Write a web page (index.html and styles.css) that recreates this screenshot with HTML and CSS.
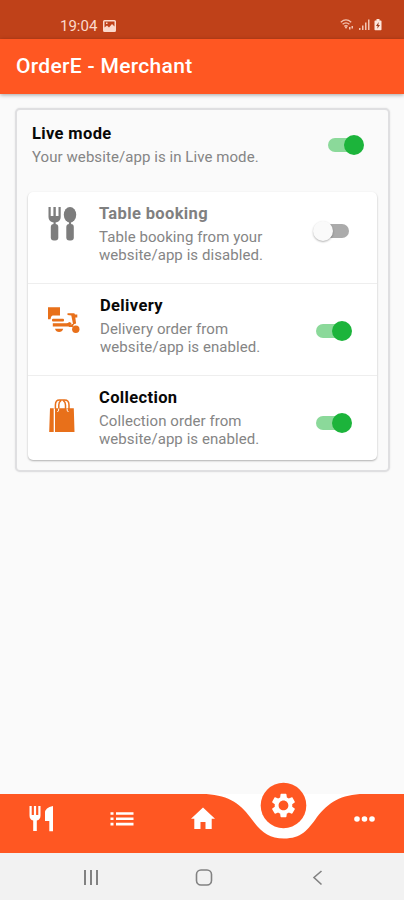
FILE: index.html
```html
<!DOCTYPE html>
<html lang="en">
<head>
<meta charset="utf-8">
<title>OrderE - Merchant</title>
<link rel="stylesheet" href="styles.css">
</head>
<body>
<div class="screen">
  <header class="statusbar">
    <span class="time">19:04</span>
    <svg class="picture" width="13" height="12" viewBox="0 0 13 12"><path fill="#fbd9cc" fill-rule="evenodd" d="M1.500 0h10A1.500 1.500 0 0 1 13 1.500v9a1.500 1.500 0 0 1-1.500 1.500h-10A1.500 1.500 0 0 1 0 10.500v-9A1.500 1.500 0 0 1 1.500 0zM1.500 1.500v6L4 5.500l2 2L9 4l2.500 2.500v-5zM3 2.500h1.500v1.500H3z"/></svg>
    <svg class="signals" width="44" height="14" viewBox="0 0 44 14">
      <g fill="none" stroke="#f3c4b2" stroke-width="1.300"><path d="M.8 4.200Q6 -.4 11.200 4.200M2.600 6.200Q6 3.400 9.400 6.200M4.300 8.200Q6 7 7.700 8.200"/></g>
      <path fill="#f3c4b2" d="M4.500 8.500h3L6 11zM9 9h1.500v2.500H9zM11.500 8H13v2.500h-1.500zM19 10h1.500v2H19zM22 7.500h1.500V12H22zM25 4.500h1.500V12H25zM28 1.500h1.500V12H28z"/>
      <path fill="#fde6dc" d="M36.500 1h3v1.500h1.300q.7 0 .7.700v8.300q0 .8-.8.800h-5.400q-.8 0-.8-.8V3.200q0-.7.700-.7h1.300z"/>
      <path fill="#993817" d="M38.700 4L36 8h1.700l-.5 2.800L40 7h-1.700z"/>
    </svg>
  </header>
  <div class="appbar"><h1>OrderE - Merchant</h1></div>
  <main>
    <section class="panel">
      <div class="live">
        <div class="copy"><h2>Live mode</h2><p>Your website/app is in Live mode.</p></div>
        <span class="switch on"><i></i></span>
      </div>
      <div class="services">
        <div class="row disabled">
          <svg class="icon" width="34" height="36" viewBox="0 0 34 36" fill="#7d7d7d"><path d="M2.500 1h2.200v9h2.700V1h2.400v9h2.700V1h2.200v10q0 4-4 5.300H6.500Q2.500 15 2.500 11z"/><ellipse cx="24" cy="8.800" rx="6.200" ry="7.800"/><path d="M7.500 15h2.200v4H7.500zM22.900 15h2.200v4h-2.200z"/><rect x="4.800" y="18" width="7.500" height="16.500" rx="3"/><rect x="20.300" y="18" width="7.500" height="16.500" rx="3"/></svg>
          <div class="copy"><h2>Table booking</h2><p>Table booking from your<br>website/app is disabled.</p></div>
          <span class="switch"><i></i></span>
        </div>
        <div class="row delivery">
          <svg class="icon" width="34" height="36" viewBox="0 0 34 36" fill="#e8701a"><path d="M2 9.300h12v8.200H6.500q-1.800.5-2 3.700H2z"/><rect x="6" y="20.800" width="12" height="2.600" rx="1"/><path d="M6.800 25.200h13.500q2 0 2.800-1.300l2.500 1-1.800 3.500h-17zM9 30.800h8.200q-1 3.200-4.100 3.200T9 30.800zM21.500 15.200h6.800l.7 1.400h2.300v3h-2l.8 6-3 .9-1.800-8.900-3.800-.7z"/><circle cx="29.800" cy="31.200" r="3.700"/><path d="M22.500 29q1.500-3 5.500-3.300l-1.200 3.300z"/></svg>
          <div class="copy"><h2>Delivery</h2><p>Delivery order from<br>website/app is enabled.</p></div>
          <span class="switch on"><i></i></span>
        </div>
        <div class="row collection">
          <svg class="icon" width="34" height="36" viewBox="0 0 34 36" fill="#e8701a"><path d="M4 10.200h3.700V34H3.200zM9 10.200h18.800L28.500 34H9z"/><g fill="none" stroke="#e8701a" stroke-width="1.500"><path d="M9.400 11V7q0-5 4-5h5.200q4.400 0 4.400 5v4M12.800 11V7q0-3 2.200-4.300M19.500 11V7q0-3-2.200-4.300"/></g><path fill="none" stroke="#fff" d="M12.800 10.500q0 3-1.500 3.500M21 10.500q0 3 1.500 3.500"/></svg>
          <div class="copy"><h2>Collection</h2><p>Collection order from<br>website/app is enabled.</p></div>
          <span class="switch on"><i></i></span>
        </div>
      </div>
    </section>
  </main>
  <nav class="tabs">
    <svg width="404" height="75" viewBox="0 0 404 75">
      <path fill="#fff" d="M202 16h163v50H202z"/>
      <path fill="#ff5722" d="M0 16H202C226 16 240 25 250 39C261 54 268 60.500 284 60.500C301 60.500 308 52 317 39C328 25 341 16 364 16H404V75H0z"/>
      <circle cx="283.500" cy="27.500" r="22.800" fill="#ff5722"/>
      <g fill="#fff">
        <path d="M29.500 28h2.200v9h2.200v-9h2.200v9h2.200v-9h2.200v9.500q0 4.200-3.700 5V53h-3.600V42.500q-3.700-.8-3.700-5zM53 28v25.300h-3.700V43H45v-8q0-5.500 8-7z"/>
        <path d="M110.500 34.200h3v2.600h-3zm5.500 0h17.500v2.600H116zm-5.500 5.300h3v2.600h-3zm5.500 0h17.500v2.600H116zm-5.500 5.300h3v2.600h-3zm5.500 0h17.500v2.600H116z"/>
        <path d="M203 29.500L191 40.800h3.300V51h6.200v-7h5v7h6.200V40.800h3.300z"/>
        <circle cx="357" cy="41" r="2.800"/><circle cx="364.500" cy="41" r="2.800"/><circle cx="372" cy="41" r="2.800"/>
      </g>
      <path fill="#fff" transform="translate(268.850 12.850) scale(1.220)" d="M19.140 12.940c.04-.3.060-.61.060-.94 0-.32-.02-.64-.07-.94l2.030-1.580c.18-.14.230-.41.120-.61l-1.920-3.320c-.12-.22-.37-.29-.59-.22l-2.390.96c-.5-.38-1.030-.7-1.620-.94l-.36-2.540c-.04-.24-.24-.41-.48-.41h-3.840c-.24 0-.43.170-.47.410l-.36 2.540c-.59.240-1.130.57-1.620.94l-2.390-.96c-.22-.08-.47 0-.59.220L2.740 8.870c-.12.210-.08.470.12.610l2.030 1.580c-.05.300-.09.630-.09.940s.02.640.07.940l-2.030 1.580c-.18.140-.23.410-.12.610l1.920 3.320c.12.220.37.290.59.220l2.390-.96c.5.380 1.030.7 1.620.94l.36 2.540c.05.240.24.410.48.410h3.840c.24 0 .44-.17.470-.41l.36-2.540c.59-.24 1.130-.56 1.620-.94l2.390.96c.22.080.47 0 .59-.22l1.920-3.320c.12-.22.070-.47-.12-.61l-2.010-1.580zM12 16c-2.200 0-4-1.800-4-4s1.800-4 4-4 4 1.800 4 4-1.800 4-4 4z"/>
    </svg>
  </nav>
  <div class="sysnav">
    <svg width="404" height="47" viewBox="0 0 404 47" fill="none" stroke="#828282" stroke-width="1.600"><path stroke-width="2" d="M85 17v15M91 17v15M97 17v15"/><rect x="196.500" y="17" width="15" height="15" rx="4.500"/><path d="M321.500 18L314 24.500l7.500 7"/></svg>
  </div>
</div>
</body>
</html>
```
FILE: styles.css
```css
* { box-sizing: border-box; }
body { margin: 0; font-family: Roboto, "Liberation Sans", sans-serif; background: #fafafa; }
h1, h2, p { margin: 0; }
svg { display: block; flex: none; }
.screen { width: 404px; height: 900px; display: flex; flex-direction: column; overflow: hidden; background: #fafafa; }
.statusbar { height: 39px; flex: none; background: #bf4119; display: flex; align-items: flex-start; padding: 17px 20px 0 60px; }
.time { font-size: 15px; line-height: 18px; color: #fbd9cc; width: 43px; }
.picture { margin-top: 3px; }
.signals { margin: 1px 0 0 auto; }
.appbar { height: 55px; flex: none; background: #ff5722; color: #fff; padding: 14px 16px; box-shadow: 0 1px 4px rgba(0,0,0,.35); }
h1 { font-size: 21px; line-height: 26px; font-weight: 500; letter-spacing: .32px; white-space: nowrap; }
main { flex: 1; padding: 14px 14px 0 15px; }
.panel { height: 364px; border: 2px solid #dfdfe1; border-radius: 5px; padding: 0 11px; background: #fafafa; box-shadow: 0 0 2px rgba(0,0,0,.1); }
.live { height: 82px; padding: 13px 0 0 4px; display: flex; }
.copy { flex: 1; white-space: nowrap; }
h2 { font-size: 16.500px; line-height: 22px; font-weight: 700; letter-spacing: .36px; color: #080808; }
p { font-size: 15px; line-height: 18px; letter-spacing: .07px; color: #858585; }
.live p { margin-top: 3px; }
.services { height: 268px; background: #fff; border-radius: 5px; box-shadow: 0 1px 2px rgba(0,0,0,.3); }
.row { height: 92px; display: flex; padding: 11px 0 0 18px; border-bottom: 1px solid #eeeeee; }
.row:last-child { height: 84px; border: 0; }
.row .icon { margin-top: 3px; margin-right: 19px; }
.row.delivery .icon { margin-right: 20px; }
.row.collection .icon { margin-top: 11px; }
.row p { margin-top: 3px; }
.disabled h2 { color: #808080; }
.switch { position: relative; width: 36px; height: 20px; flex: none; display: flex; align-items: center; margin: 18px 28px 0 0; }
.switch::before { content: ""; width: 33px; height: 14px; border-radius: 7px; background: #ababab; margin-left: 3px; }
.switch i { position: absolute; left: 0; top: 0; width: 20px; height: 20px; border-radius: 50%; background: #fafafa; box-shadow: 0 1px 2px rgba(0,0,0,.3); }
.switch.on { margin: 26px 25px 0 0; }
.switch.on::before { background: #8bd99a; margin-left: 0; }
.switch.on i { left: 16px; background: #1cb43b; box-shadow: none; }
.live .switch.on { margin: 12px 13px 0 0; }
.tabs { height: 75px; flex: none; }
.sysnav { height: 47px; flex: none; background: #f2f2f2; }
```
